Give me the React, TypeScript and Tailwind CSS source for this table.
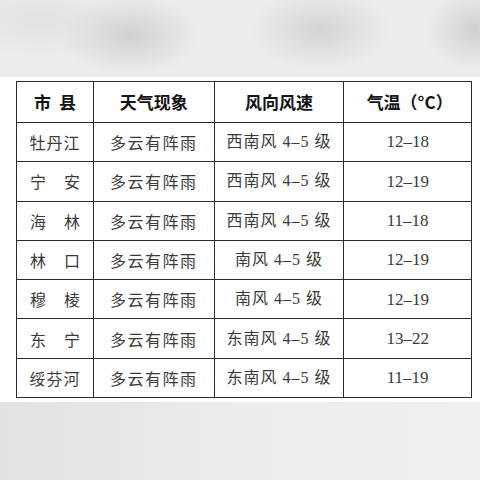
import React from "react";

const rows: [string[], string, string, string][] = [
  [["牡丹江"], "多云有阵雨", "西南风 4–5 级", "12–18"],
  [["宁", "安"], "多云有阵雨", "西南风 4–5 级", "12–19"],
  [["海", "林"], "多云有阵雨", "西南风 4–5 级", "11–18"],
  [["林", "口"], "多云有阵雨", "南风 4–5 级", "12–19"],
  [["穆", "棱"], "多云有阵雨", "南风 4–5 级", "12–19"],
  [["东", "宁"], "多云有阵雨", "东南风 4–5 级", "13–22"],
  [["绥芬河"], "多云有阵雨", "东南风 4–5 级", "11–19"],
];

const serif = "font-['Liberation_Serif','Noto_Sans_CJK_SC',serif]";
const sans = "font-['Noto_Sans_CJK_SC',sans-serif]";

export default function App() {
  return (
    <div className="w-[480px] h-[480px] flex flex-col overflow-hidden">
      <div className="h-[77px] bg-[#ececec] bg-[radial-gradient(ellipse_70px_40px_at_130px_35px,#d0d0d0,transparent),radial-gradient(ellipse_70px_40px_at_320px_30px,#d3d3d3,transparent),radial-gradient(ellipse_50px_40px_at_475px_30px,#d0d0d0,transparent),radial-gradient(ellipse_80px_40px_at_40px_20px,#e2e2e2,transparent)]" />
      <div className="h-[325px] bg-white pt-[4px] pl-[16px]">
        <div className="w-[456px] border-l border-t border-[#2a2a2a]">
          <div className="flex h-[41px] text-[#141414] text-[17px] font-bold">
            <div className={`w-[77px] border-r border-b border-[#2a2a2a] flex items-center justify-center ${sans}`}>
              <span className="w-[42px] flex justify-between"><span>市</span><span>县</span></span>
            </div>
            <div className={`w-[121px] border-r border-b border-[#2a2a2a] flex items-center justify-center ${sans}`}>天气现象</div>
            <div className={`w-[130px] border-r border-b border-[#2a2a2a] flex items-center justify-center ${sans}`}>风向风速</div>
            <div className={`w-[128px] border-r border-b border-[#2a2a2a] flex items-center justify-center pl-[4px] ${sans}`}>气温（°C）</div>
          </div>
          {rows.map(([name, w, wind, t], i) => (
            <div key={i} className="flex h-[39.3px] text-[#3a3a3a] text-[16px]">
              <div className={`w-[77px] border-r border-b border-[#2a2a2a] flex items-center justify-center ${sans}`}>
                {name.length === 1 ? (
                  <span className="tracking-[1px]">{name[0]}</span>
                ) : (
                  <span className="w-[50px] flex justify-between"><span>{name[0]}</span><span>{name[1]}</span></span>
                )}
              </div>
              <div className={`w-[121px] border-r border-b border-[#2a2a2a] flex items-center justify-center tracking-[1.5px] ${sans}`}>{w}</div>
              <div className={`w-[130px] border-r border-b border-[#2a2a2a] flex items-center justify-center tracking-[1px] ${serif}`}>{wind}</div>
              <div className={`w-[128px] border-r border-b border-[#2a2a2a] flex items-center justify-center text-[17px] ${serif}`}>{t}</div>
            </div>
          ))}
        </div>
      </div>
      <div className="flex-1 bg-[#e8e8e8] bg-[linear-gradient(90deg,#e2e2e2,#ececec_50%,#f0f0f0)]" />
    </div>
  );
}
